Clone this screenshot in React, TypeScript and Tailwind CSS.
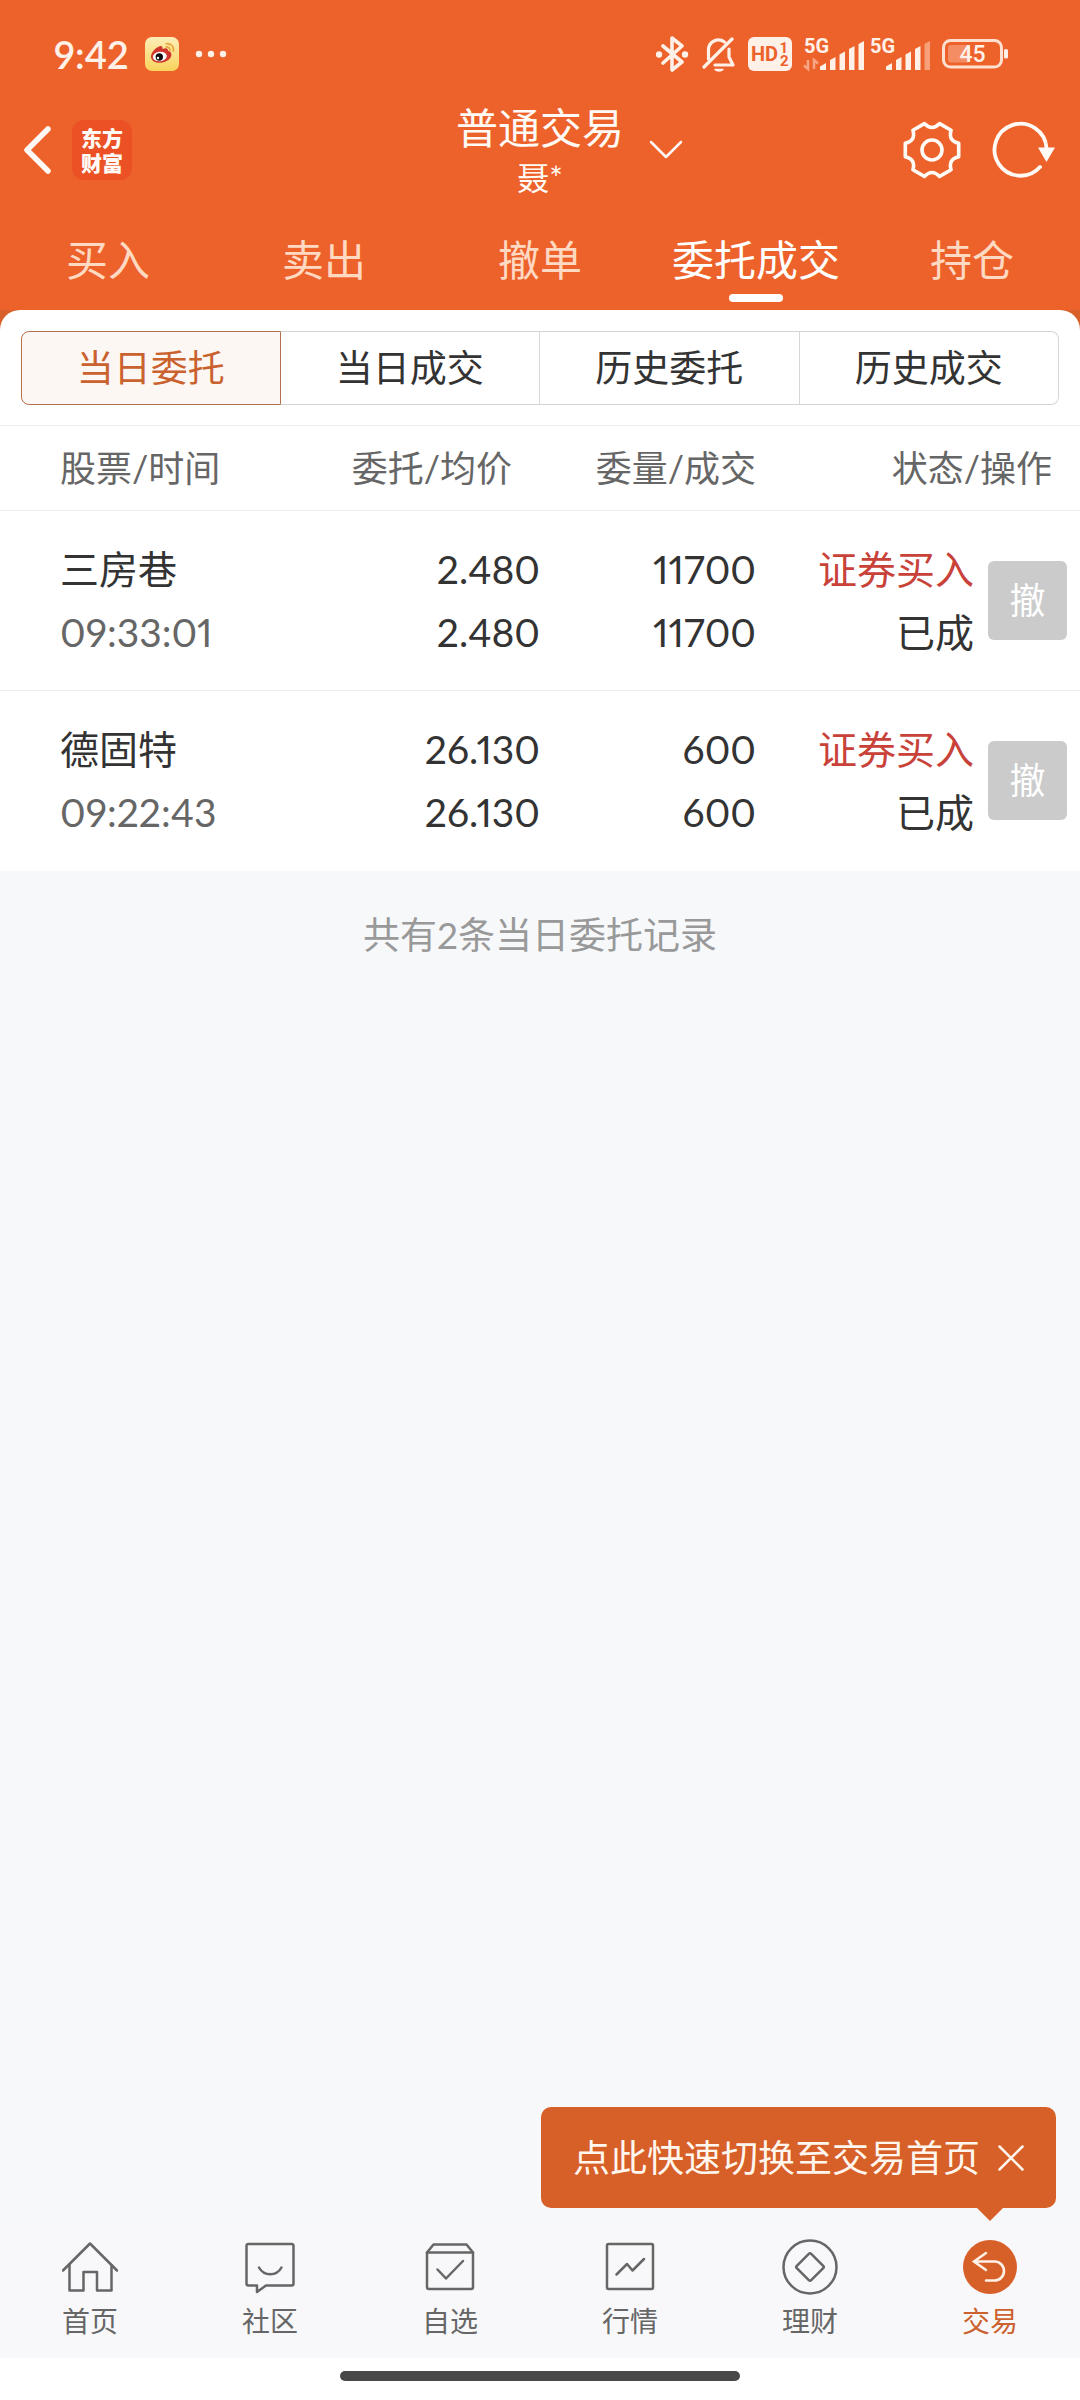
import { useState, type ReactNode } from "react";

const tabs = ["买入", "卖出", "撤单", "委托成交", "持仓"];
const segments = ["当日委托", "当日成交", "历史委托", "历史成交"];

const orders = [
  { name: "三房巷", time: "09:33:01", price: "2.480", avg: "2.480", amount: "11700", filled: "11700", side: "证券买入", status: "已成" },
  { name: "德固特", time: "09:22:43", price: "26.130", avg: "26.130", amount: "600", filled: "600", side: "证券买入", status: "已成" },
];

const navItems: { name: string; icon: ReactNode }[] = [
  {
    name: "首页",
    icon: (
      <>
        <path d="M1 31.500 28 4.500l27 27" />
        <path d="M7.500 26v25.500H21.500V33H35v18.500h14.500V26" />
      </>
    ),
  },
  {
    name: "社区",
    icon: (
      <>
        <path d="M6.500 5h43a2 2 0 0 1 2 2v37.500a2 2 0 0 1-2 2H24L15 53v-6.500H6.500a2 2 0 0 1-2-2V7a2 2 0 0 1 2-2Z" />
        <path d="M17 28.500c5 9 17.500 9 22.500 0" />
      </>
    ),
  },
  {
    name: "自选",
    icon: (
      <>
        <path d="M5 13.500 11.500 5.500h33l6.500 8V48a2 2 0 0 1-2 2H7a2 2 0 0 1-2-2Z" />
        <path d="M5 13.500h46M15.500 30.500l8.500 9 17-17.500" />
      </>
    ),
  },
  {
    name: "行情",
    icon: (
      <>
        <rect x="5" y="5" width="46" height="45" rx="1.500" />
        <path d="m14.500 35.500 10.500-10.500 5.500 6.500L42 20" />
      </>
    ),
  },
  {
    name: "理财",
    icon: (
      <>
        <circle cx="28" cy="28" r="26.500" />
        <path d="M26.800 14.800a1.700 1.700 0 0 1 2.400 0l12 12a1.700 1.700 0 0 1 0 2.400l-12 12a1.700 1.700 0 0 1-2.400 0l-12-12a1.700 1.700 0 0 1 0-2.400Z" />
      </>
    ),
  },
  {
    name: "交易",
    icon: (
      <>
        <circle cx="28" cy="28" r="27" fill="#d75f28" stroke="none" />
        <path d="M24 14 12 22.500 24 31M12 22.500h20.500a9.500 9.500 0 0 1 0 19H24" stroke="#fff0e6" strokeWidth="2.600" strokeLinejoin="miter" />
      </>
    ),
  },
];

function Signal({ weak, data }: { weak?: boolean; data?: boolean }) {
  return (
    <svg viewBox="0 0 60 36" className="h-9 w-[60px] overflow-visible" fill="#fff0e8">
      <text x="0" y="17" fontSize="20" fontWeight="700" fontFamily="Roboto, sans-serif">5G</text>
      {data && <path d="M4 24v9L0 29.500M10 33v-9l4 3.500" stroke="#f7a582" strokeWidth="2.600" fill="none" />}
      <path d="M16 30.500 22 27v7h-6ZM26 24l5.500-3V34H26ZM35.500 18.500l5.500-3V34h-5.500ZM45 13l5.500-3V34H45Z" />
      <path d="M54.500 8 60 5V34h-5.500Z" fill={weak ? "#f7a07a" : "#fff0e8"} />
    </svg>
  );
}

function StatusBar() {
  return (
    <div className="flex h-[100px] items-center justify-between pl-[54px] pr-[72px] pt-2 text-[#fff0e8]">
      <div className="flex items-center">
        <span className="text-[38px] font-semibold leading-none">9:42</span>
        <svg viewBox="0 0 34 34" className="ml-4 h-[34px] w-[34px]">
          <defs>
            <linearGradient id="weibo" x1="0" y1="0" x2="0" y2="1">
              <stop offset="0" stopColor="#fdeeb8" />
              <stop offset="1" stopColor="#f8d35c" />
            </linearGradient>
          </defs>
          <rect width="34" height="34" rx="7" fill="url(#weibo)" />
          <path d="M6 19.500C6 15 12 9.500 15.500 9c1.500-.2 2.500 1.500 2 3 3-1.500 6-1 5.500 1.800 4 .8 4.500 5 1.500 8.200-3 3-8 4.300-12.500 3.500C8.500 25 6 22.500 6 19.500Z" fill="#d2352b" />
          <ellipse cx="14.800" cy="19.500" rx="7" ry="4.800" fill="#fff" transform="rotate(-8 14.800 19.500)" />
          <circle cx="14.300" cy="20" r="3.700" fill="#111" />
          <circle cx="13" cy="21" r="1.200" fill="#fff" />
          <path d="M20.500 10c3-.5 5 1.500 4.500 4.300M20.500 6.800c5.500-1 9 3 7.800 8" fill="none" stroke="#eaa53a" strokeWidth="1.600" />
        </svg>
        <svg viewBox="0 0 32 8" className="ml-4 h-2 w-8" fill="currentColor">
          <circle cx="4" cy="4" r="3.200" />
          <circle cx="16" cy="4" r="3.200" />
          <circle cx="28" cy="4" r="3.200" />
        </svg>
      </div>
      <div className="flex items-center gap-3">
        <svg viewBox="0 0 34 36" className="h-9 w-[34px]" fill="none" stroke="currentColor" strokeWidth="3.600" strokeLinecap="round" strokeLinejoin="round">
          <path d="m7 10 19 16-10 8V2l10 8L7 27" />
          <circle cx="3" cy="18.500" r="3.200" fill="currentColor" stroke="none" />
          <circle cx="29" cy="18.500" r="3.200" fill="currentColor" stroke="none" />
        </svg>
        <svg viewBox="0 0 34 36" className="h-9 w-[34px]" fill="none" stroke="currentColor" strokeWidth="3.200" strokeLinecap="round" strokeLinejoin="round">
          <path d="M30 3 2 31" />
          <path d="M6.500 23V14a10 10 0 0 1 16-8M27 13v8l4 8H13" />
          <path d="M13 33.500c2 2 6 2 8 0Z" fill="currentColor" strokeWidth="1.500" />
        </svg>
        <svg viewBox="0 0 44 34" className="h-[34px] w-11">
          <rect width="44" height="34" rx="6" fill="#fff0e8" />
          <g fill="#ed622b" fontFamily="Roboto, sans-serif" fontWeight="700">
            <text x="3" y="24" fontSize="20">HD</text>
            <text x="32" y="16" fontSize="15">1</text>
            <text x="32" y="29" fontSize="15">2</text>
          </g>
        </svg>
        <div className="flex gap-1.5">
          <Signal data />
          <Signal weak />
        </div>
        <svg viewBox="0 0 66 30" className="h-[30px] w-[66px]">
          <rect x="1.500" y="1.500" width="58" height="26.500" rx="7" fill="none" stroke="#ffe0d0" strokeWidth="3" />
          <rect x="6" y="6" width="22" height="17.500" rx="3" fill="#f48d63" />
          <rect x="62" y="10" width="4" height="9.500" rx="1.500" fill="#fff0e8" />
          <text x="30.500" y="23" fontSize="23" fontWeight="500" fontFamily="Roboto, sans-serif" fill="#fff0e8" textAnchor="middle">45</text>
        </svg>
      </div>
    </div>
  );
}

function TitleBar() {
  return (
    <div className="grid grid-cols-[1fr_auto_1fr] items-center text-[#fffaf5]">
      <div className="flex items-center pl-[22px]">
        <button aria-label="返回">
          <svg viewBox="0 0 30 50" className="h-[50px] w-[30px]" fill="none" stroke="currentColor" strokeWidth="5.500" strokeLinecap="round" strokeLinejoin="round">
            <path d="M26 4 5 25l21 21" />
          </svg>
        </button>
        <div className="ml-5 flex h-[60px] w-[60px] flex-col items-center justify-center rounded-xl bg-[#eb5125] text-[21px] font-black leading-[25px]">
          <span>东方</span>
          <span>财富</span>
        </div>
      </div>
      <div className="text-center">
        <h1 className="text-[42px] leading-[56px]">普通交易</h1>
        <p className="text-[32px] leading-[44px]">聂*</p>
      </div>
      <div className="flex items-center justify-between pl-6 pr-6">
        <button aria-label="切换账户">
          <svg viewBox="0 0 36 20" className="h-5 w-9" fill="none" stroke="currentColor" strokeWidth="2.500" strokeLinecap="round" strokeLinejoin="round">
            <path d="m3 2 15 15L33 2" />
          </svg>
        </button>
        <div className="flex items-center gap-[30px]">
          <button aria-label="设置">
            <svg viewBox="-30 -30 60 60" className="h-[60px] w-[60px]" fill="none" stroke="currentColor" strokeWidth="3.600" strokeLinejoin="round">
              <path d="M26.700-6.700V6.700Q16 9.200 19.100 19.800L7.600 26.400Q0 18.500-7.600 26.400L-19.100 19.800Q-16 9.200-26.700 6.700V-6.700Q-16-9.200-19.100-19.800L-7.600-26.400Q0-18.500 7.600-26.400L19.100-19.800Q16-9.200 26.700-6.700Z" />
              <circle r="10" />
            </svg>
          </button>
          <button aria-label="刷新">
            <svg viewBox="0 0 64 60" className="h-[60px] w-16" fill="none" stroke="currentColor" strokeWidth="3.800" strokeLinecap="round">
              <path d="M54.500 28A26 26 0 1 0 48 47" />
              <path d="M46 27.500h17L54.500 42Z" fill="currentColor" stroke="none" />
            </svg>
          </button>
        </div>
      </div>
    </div>
  );
}

function OrderTable() {
  return (
    <table className="w-full table-fixed border-collapse bg-white text-right text-[39px] leading-[63px] text-[#333]">
      <colgroup>
        <col className="w-[26%]" />
        <col className="w-[24%]" />
        <col className="w-[20%]" />
        <col className="w-[30%]" />
      </colgroup>
      <thead>
        <tr className="h-[85px] border-y border-[#ececec] text-[36px] text-[#666]">
          <th className="pl-[60px] text-left font-normal">股票/时间</th>
          <th className="pr-7 font-normal">委托/均价</th>
          <th className="font-normal">委量/成交</th>
          <th className="pr-7 font-normal">状态/操作</th>
        </tr>
      </thead>
      <tbody>
        {orders.map((order) => (
          <tr key={order.time} className="h-[180px] border-b border-[#ececec] last:border-b-0">
            <td className="pl-[60px] text-left">
              <div>{order.name}</div>
              <div className="text-[#666]">{order.time}</div>
            </td>
            <td>
              <div>{order.price}</div>
              <div>{order.avg}</div>
            </td>
            <td>
              <div>{order.amount}</div>
              <div>{order.filled}</div>
            </td>
            <td className="pr-[13px]">
              <div className="flex items-center justify-end gap-3.5">
                <div>
                  <div className="text-[#c9423a]">{order.side}</div>
                  <div>{order.status}</div>
                </div>
                <button className="h-[79px] w-[79px] rounded-md bg-[#cbcbcb] text-[36px] text-white">撤</button>
              </div>
            </td>
          </tr>
        ))}
      </tbody>
    </table>
  );
}

export default function App() {
  const [tab, setTab] = useState("委托成交");
  const [segment, setSegment] = useState("当日委托");
  const [showTip, setShowTip] = useState(true);

  return (
    <div className="flex min-h-screen flex-col bg-[#f7f8fa] font-['Lato','Noto_Sans_CJK_SC',sans-serif] proportional-nums">
      <header className="bg-[#ed622b]">
        <StatusBar />
        <TitleBar />
        <nav className="grid h-[110px] grid-cols-5">
          {tabs.map((name) => (
            <button
              key={name}
              onClick={() => setTab(name)}
              className={`relative pb-2.5 pt-5 text-[42px] leading-[60px] ${tab === name ? "text-white" : "text-[#ffd9c2]"}`}
            >
              {name}
              {tab === name && <span className="absolute bottom-2 left-1/2 h-2 w-[54px] -translate-x-1/2 rounded-full bg-white" />}
            </button>
          ))}
        </nav>
      </header>

      <main className="flex-1">
        <div className="bg-[#d9602a]">
          <div className="rounded-t-[20px] bg-white px-[21px] pb-5 pt-[21px]">
            <div className="grid h-[74px] grid-cols-4 text-[37px]">
              {segments.map((name) => (
                <button
                  key={name}
                  onClick={() => setSegment(name)}
                  className={`border first:rounded-l-lg last:rounded-r-lg ${
                    segment === name
                      ? "border-[#b3714f] bg-[#fdf7f3] text-[#c9622f]"
                      : "border-l-0 border-[#d6d6d6] bg-white text-[#333]"
                  }`}
                >
                  {name}
                </button>
              ))}
            </div>
          </div>
        </div>
        <OrderTable />
        <p className="pt-9 text-center text-[37px] leading-[56px] text-[#999]">共有2条当日委托记录</p>
      </main>

      <footer className="relative">
        {showTip && (
          <div className="absolute bottom-full right-6 mb-3.5 flex h-[101px] items-center gap-[18px] rounded-[10px] bg-[#d75f28] px-8 text-[37px] text-[#fff6ee]">
            <span>点此快速切换至交易首页</span>
            <button aria-label="关闭" onClick={() => setShowTip(false)}>
              <svg viewBox="0 0 26 26" className="h-[26px] w-[26px]" fill="none" stroke="currentColor" strokeWidth="2.500" strokeLinecap="round">
                <path d="m1.500 1.500 23 23M24.500 1.500l-23 23" />
              </svg>
            </button>
            <svg viewBox="0 0 26 13" className="absolute right-[53px] top-full h-[13px] w-[26px]" fill="#d75f28">
              <path d="M0 0h26L13 13Z" />
            </svg>
          </div>
        )}
        <nav className="grid grid-cols-6 bg-[#f8f8fa] pb-[19px] pt-[17px]">
          {navItems.map((item) => (
            <a
              key={item.name}
              href="#"
              className={`flex flex-col items-center gap-2 text-[28px] leading-9 ${item.name === "交易" ? "text-[#cc622f]" : "text-[#666]"}`}
            >
              <svg viewBox="0 0 56 56" className="h-14 w-14" fill="none" stroke="currentColor" strokeWidth="2.500" strokeLinecap="round" strokeLinejoin="round">
                {item.icon}
              </svg>
              {item.name}
            </a>
          ))}
        </nav>
        <div className="flex h-[42px] justify-center bg-white pt-[13px]">
          <div className="h-2.5 w-[37%] rounded-full bg-[#484848]" />
        </div>
      </footer>
    </div>
  );
}
